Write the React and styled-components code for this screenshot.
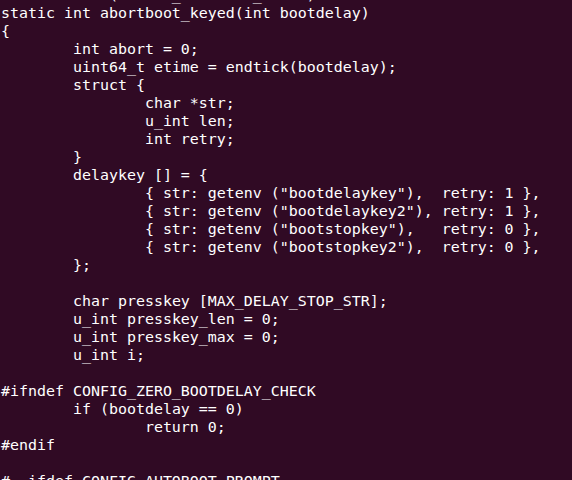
import React from "react";
import styled, { createGlobalStyle } from "styled-components";

const Global = createGlobalStyle`
  html, body {
    margin: 0;
    padding: 0;
    background: #300a24;
    overflow: hidden;
  }
`;

const Terminal = styled.div`
  width: 572px;
  height: 480px;
  overflow: hidden;
  background: #300a24;
  color: #ffffff;
  font-family: "DejaVu Sans Mono", "Liberation Mono", monospace;
  font-size: 14.95px;
  line-height: 18px;
`;

const Buffer = styled.pre`
  margin: -14px 0 0 0;
  padding: 0 0 0 1px;
  font: inherit;
  white-space: pre;
  tab-size: 8;
`;

const Line = styled.div`
  height: 18px;
`;

const lines = [
  "# if defined(CONFIG_AUTOBOOT_KEYED)",
  "static int abortboot_keyed(int bootdelay)",
  "{",
  "\tint abort = 0;",
  "\tuint64_t etime = endtick(bootdelay);",
  "\tstruct {",
  "\t\tchar *str;",
  "\t\tu_int len;",
  "\t\tint retry;",
  "\t}",
  "\tdelaykey [] = {",
  '\t\t{ str: getenv ("bootdelaykey"),  retry: 1 },',
  '\t\t{ str: getenv ("bootdelaykey2"), retry: 1 },',
  '\t\t{ str: getenv ("bootstopkey"),   retry: 0 },',
  '\t\t{ str: getenv ("bootstopkey2"),  retry: 0 },',
  "\t};",
  "",
  "\tchar presskey [MAX_DELAY_STOP_STR];",
  "\tu_int presskey_len = 0;",
  "\tu_int presskey_max = 0;",
  "\tu_int i;",
  "",
  "#ifndef CONFIG_ZERO_BOOTDELAY_CHECK",
  "\tif (bootdelay == 0)",
  "\t\treturn 0;",
  "#endif",
  "",
  "#  ifdef CONFIG_AUTOBOOT_PROMPT",
];

export default function App() {
  return (
    <>
      <Global />
      <Terminal>
        <Buffer>
          {lines.map((l, i) => (
            <Line key={i}>{l}</Line>
          ))}
        </Buffer>
      </Terminal>
    </>
  );
}
